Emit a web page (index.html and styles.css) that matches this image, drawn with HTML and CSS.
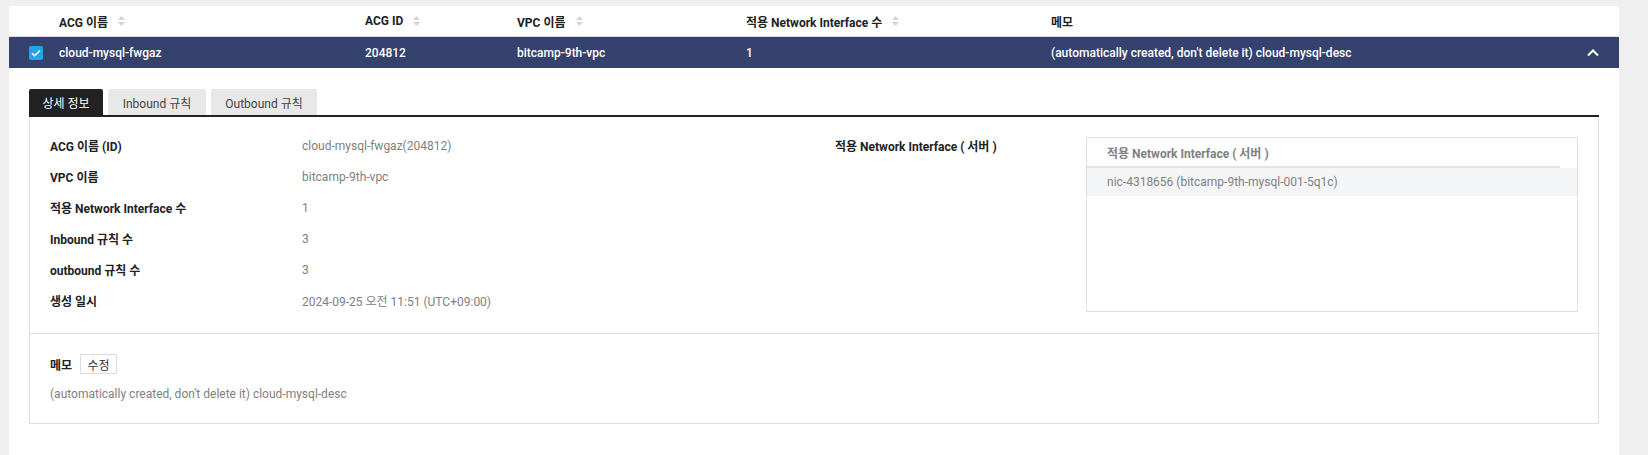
FILE: index.html
```html
<!DOCTYPE html>
<html lang="ko">
<head>
<meta charset="utf-8">
<title>ACG</title>
<link rel="stylesheet" href="styles.css">
</head>
<body>
<div class="page">
  <div class="card">
    <div class="thead">
      <div class="c-check"></div>
      <div class="c c1">ACG 이름 <span class="sort"><svg width="7" height="10" viewBox="0 0 7 10"><path d="M3.5 0L7 4H0z" fill="#d4d4d4"/><path d="M3.5 10L7 6H0z" fill="#d4d4d4"/></svg></span></div>
      <div class="c c2">ACG ID <span class="sort"><svg width="7" height="10" viewBox="0 0 7 10"><path d="M3.5 0L7 4H0z" fill="#d4d4d4"/><path d="M3.5 10L7 6H0z" fill="#d4d4d4"/></svg></span></div>
      <div class="c c3">VPC 이름 <span class="sort"><svg width="7" height="10" viewBox="0 0 7 10"><path d="M3.5 0L7 4H0z" fill="#d4d4d4"/><path d="M3.5 10L7 6H0z" fill="#d4d4d4"/></svg></span></div>
      <div class="c c4">적용 Network Interface 수 <span class="sort"><svg width="7" height="10" viewBox="0 0 7 10"><path d="M3.5 0L7 4H0z" fill="#d4d4d4"/><path d="M3.5 10L7 6H0z" fill="#d4d4d4"/></svg></span></div>
      <div class="c c5">메모</div>
      <div class="c-arrow"></div>
    </div>
    <div class="trow">
      <div class="c-check"><span class="checkbox"><svg width="14" height="14" viewBox="0 0 14 14"><path d="M3 7.2l2.6 2.6L11 4.4" fill="none" stroke="#fff" stroke-width="1.4"/></svg></span></div>
      <div class="c c1">cloud-mysql-fwgaz</div>
      <div class="c c2">204812</div>
      <div class="c c3">bitcamp-9th-vpc</div>
      <div class="c c4">1</div>
      <div class="c c5">(automatically created, don't delete it) cloud-mysql-desc</div>
      <div class="c-arrow"><svg width="12" height="8" viewBox="0 0 12 8"><path d="M1 6.5L6 1.5l5 5" fill="none" stroke="#fff" stroke-width="2"/></svg></div>
    </div>

    <div class="detail">
      <div class="tabs">
        <div class="tab active t1">상세 정보</div>
        <div class="tab t2">Inbound 규칙</div>
        <div class="tab t3">Outbound 규칙</div>
      </div>
      <div class="box">
        <div class="info">
          <div class="info-left">
            <div class="irow"><div class="lbl">ACG 이름 (ID)</div><div class="val">cloud-mysql-fwgaz(204812)</div></div>
            <div class="irow"><div class="lbl">VPC 이름</div><div class="val">bitcamp-9th-vpc</div></div>
            <div class="irow"><div class="lbl">적용 Network Interface 수</div><div class="val">1</div></div>
            <div class="irow"><div class="lbl">Inbound 규칙 수</div><div class="val">3</div></div>
            <div class="irow"><div class="lbl">outbound 규칙 수</div><div class="val">3</div></div>
            <div class="irow"><div class="lbl">생성 일시</div><div class="val">2024-09-25 오전 11:51 (UTC+09:00)</div></div>
          </div>
          <div class="info-mid"><div class="irow"><div class="lbl">적용 Network Interface ( 서버 )</div></div></div>
          <div class="ni-box">
            <div class="ni-head">적용 Network Interface ( 서버 )</div>
            <div class="ni-row">nic-4318656 (bitcamp-9th-mysql-001-5q1c)</div>
          </div>
        </div>
        <div class="memo">
          <div class="memo-top"><span class="lbl">메모</span><button class="btn">수정</button></div>
          <div class="memo-text">(automatically created, don't delete it) cloud-mysql-desc</div>
        </div>
      </div>
    </div>
  </div>
</div>
</body>
</html>
```

FILE: styles.css
```css
* { box-sizing: border-box; }
html, body { margin: 0; padding: 0; }
body {
  background: #efefef;
  font-family: Roboto, "Noto Sans CJK KR", sans-serif;
  font-size: 12px;
  color: #222;
}
.page {
  padding: 6px 29px 0 9px;
}
.card {
  background: #fff;
  padding-bottom: 40px;
  border-top-right-radius: 3px;
}
.thead, .trow {
  display: flex;
  align-items: center;
  padding: 0 20px;
}
.thead {
  height: 31px;
  border-bottom: 1px solid #dcdcdc;
  font-weight: 700;
  color: #222;
}
.trow {
  height: 31px;
  background: #36426e;
  color: #fff;
  font-weight: 500;
}
.c-check { width: 30px; flex: none; display: flex; align-items: center; }
.checkbox {
  width: 14px; height: 14px; border-radius: 2px;
  background: #22a6e6; display: block;
}
.checkbox svg { display: block; }
.c { flex: none; white-space: nowrap; display: flex; align-items: center; }
.c1 { width: 306px; }
.c2 { width: 152px; }
.c3 { width: 229px; }
.c4 { width: 305px; }
.c5 { flex: 1; }
.c-arrow { width: 12px; flex: none; display: flex; justify-content: flex-end; }
.c-arrow svg { display: block; }
.sort { display: inline-flex; margin-left: 10px; }
.sort svg { display: block; }

.detail { padding: 21px 20px 0; }
.tabs {
  display: flex;
  gap: 5px;
  border-bottom: 2px solid #222;
}
.tab {
  height: 26px;
  display: flex;
  align-items: center;
  justify-content: center;
  background: #e8e8e8;
  color: #444;
  border-radius: 2px 2px 0 0;
  white-space: nowrap;
}
.t1 { width: 74px; }
.t2 { width: 98px; }
.t3 { width: 106px; }
.tab.active { background: #222; color: #fff; }

.box {
  border: 1px solid #dedede;
  border-top: none;
}
.info {
  display: flex;
  padding: 13px 20px 17px;
  border-bottom: 1px solid #dedede;
}
.info-left { width: 785px; flex: none; }
.info-mid { width: 251px; flex: none; }
.irow { height: 31px; display: flex; align-items: center; }
.lbl { font-weight: 700; color: #222; }
.info-left .lbl { width: 252px; flex: none; }
.val { color: #808080; }
.ni-box {
  width: 493px;
  height: 175px;
  margin-top: 7px;
  border: 1px solid #dedede;
}
.ni-head {
  height: 30px;
  margin-right: 17px;
  padding-left: 20px;
  display: flex;
  align-items: center;
  font-weight: 700;
  color: #808080;
  border-bottom: 2px solid #e4e4e4;
}
.ni-row {
  height: 28px;
  padding-left: 20px;
  display: flex;
  align-items: center;
  background: #f4f5f7;
  color: #808080;
}
.memo { padding: 20px 20px 22px; }
.memo-top { display: flex; align-items: center; gap: 8px; height: 20px; }
.btn {
  font: inherit;
  height: 20px;
  width: 37px;
  padding: 0;
  background: #fff;
  border: 1px solid #dcdcdc;
  color: #333;
}
.memo-text { margin-top: 13px; color: #808080; line-height: 14px; }
```
